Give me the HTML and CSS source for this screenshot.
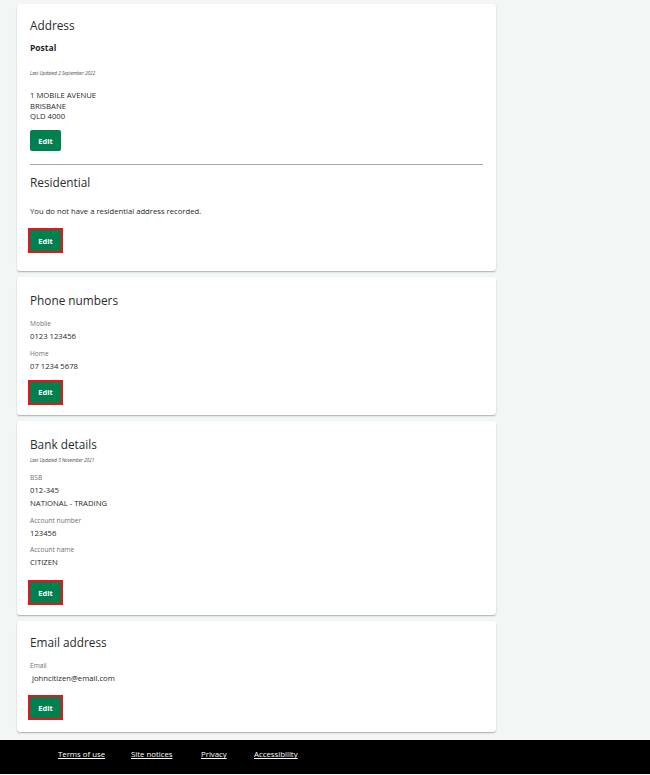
FILE: index.html
```html
<!DOCTYPE html>
<html lang="en">
<head>
<meta charset="utf-8">
<title>Contact details</title>
<link rel="stylesheet" href="styles.css">
</head>
<body>
<main class="page">
  <section class="card card-address">
    <h2 class="title">Address</h2>
    <h3 class="subtitle">Postal</h3>
    <p class="updated updated-postal">Last Updated 2 September 2022</p>
    <p class="address">1 MOBILE AVENUE<br>BRISBANE<br>QLD 4000</p>
    <button class="btn btn-first" type="button">Edit</button>
    <hr class="divider">
    <h2 class="title title-res">Residential</h2>
    <p class="text text-res">You do not have a residential address recorded.</p>
    <button class="btn btn-focus btn-res" type="button">Edit</button>
  </section>

  <section class="card card-phone">
    <h2 class="title">Phone numbers</h2>
    <p class="label label-first">Mobile</p>
    <p class="value">0123 123456</p>
    <p class="label">Home</p>
    <p class="value">07 1234 5678</p>
    <button class="btn btn-focus btn-gap" type="button">Edit</button>
  </section>

  <section class="card card-bank">
    <h2 class="title">Bank details</h2>
    <p class="updated updated-bank">Last Updated 3 November 2021</p>
    <p class="label label-bsb">BSB</p>
    <p class="value">012-345</p>
    <p class="value value-bank">NATIONAL - TRADING</p>
    <p class="label">Account number</p>
    <p class="value">123456</p>
    <p class="label">Account name</p>
    <p class="value">CITIZEN</p>
    <button class="btn btn-focus btn-bank" type="button">Edit</button>
  </section>

  <section class="card card-email">
    <h2 class="title">Email address</h2>
    <p class="label label-first">Email</p>
    <p class="value value-email">&nbsp;johncitizen@email.com</p>
    <button class="btn btn-focus btn-gap-lg" type="button">Edit</button>
  </section>
</main>
<footer class="footer">
  <nav class="footer-links">
    <a href="#">Terms of use</a>
    <a href="#">Site notices</a>
    <a href="#">Privacy</a>
    <a href="#">Accessibility</a>
  </nav>
</footer>
</body>
</html>
```
FILE: styles.css
```css
html, body {
  margin: 0;
  padding: 0;
}
body {
  background: #f2f7f6;
  font-family: "Open Sans", "Noto Sans", "Liberation Sans", sans-serif;
  color: #1f1f1f;
  font-size: 8px;
}
p, h2, h3 {
  margin: 0;
}
.page {
  width: 479px;
  padding: 4px 0 0 17px;
  display: flex;
  flex-direction: column;
  gap: 6.3px;
}
.card {
  background: #fff;
  border-radius: 3px;
  box-shadow: 0 1px 1.5px rgba(0, 0, 0, 0.3);
  padding: 13px 13px 12px 13px;
  display: flex;
  flex-direction: column;
  align-items: flex-start;
}
.card-address { padding-bottom: 20px; }
.card-phone { padding-top: 15px; }
.card-bank { padding-top: 15px; }
.card-email { padding-bottom: 14px; }

.title {
  font-size: 11.8px;
  line-height: 16px;
  font-weight: 400;
  color: #2b2b2b;
}
.subtitle {
  margin-top: 9px;
  font-size: 8.5px;
  line-height: 12px;
  font-weight: 700;
}
.updated {
  font-size: 4.6px;
  line-height: 8px;
  font-style: italic;
  color: #444;
}
.updated-postal { margin-top: 15px; }
.updated-bank { margin-top: 4px; }
.address {
  margin-top: 13px;
  line-height: 10.5px;
  font-size: 7.7px;
}
.btn {
  width: 31px;
  height: 21px;
  padding: 0;
  border: 0;
  border-radius: 2px;
  background: #00804f;
  color: #fff;
  font-family: inherit;
  font-size: 7.5px;
  font-weight: 700;
}
.btn-first { margin-top: 8.5px; }
.btn-focus {
  outline: 2px solid #e8141b;
  border-radius: 0;
}
.btn-res { margin-top: 13.5px; }
.btn-gap { margin-top: 10px; }
.btn-bank { margin-top: 14px; }
.btn-gap-lg { margin-top: 13px; }
.divider {
  align-self: stretch;
  margin: 12.5px 0 0 0;
  border: 0;
  height: 1px;
  background: #a9a9a9;
}
.title-res { margin-top: 9px; }
.text {
  font-size: 7.7px;
  line-height: 11px;
}
.text-res { margin-top: 16px; }
.label {
  margin-top: 6.5px;
  font-size: 6.6px;
  line-height: 10px;
  color: #707070;
}
.label-first { margin-top: 11px; }
.label-bsb { margin-top: 9px; }
.value {
  margin-top: 2px;
  font-size: 7.7px;
  line-height: 11px;
}
.value-bank { margin-top: 2px; }
.footer {
  margin-top: 8px;
  height: 34px;
  background: #000;
}
.footer-links {
  display: grid;
  grid-template-columns: 73px 70px 53px auto;
  padding: 9px 0 0 58px;
}
.footer-links a {
  justify-self: start;
  color: #fff;
  font-size: 7.8px;
  line-height: 11px;
  text-decoration: underline;
}
```
